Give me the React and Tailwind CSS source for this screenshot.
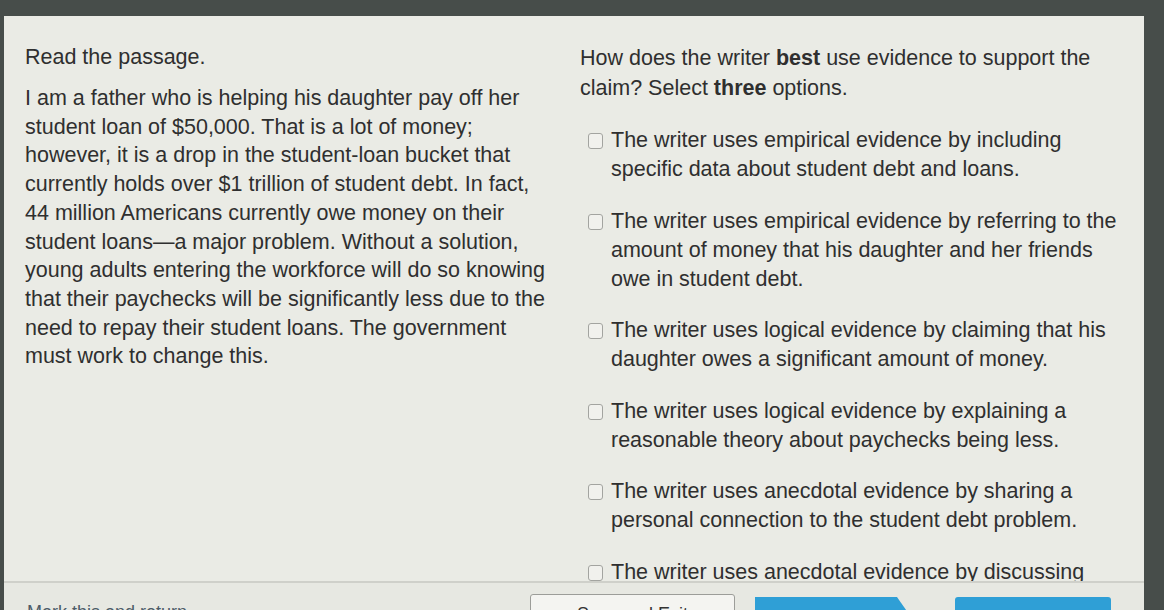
import React from "react";

const passage = [
  "I am a father who is helping his daughter pay off her",
  "student loan of $50,000. That is a lot of money;",
  "however, it is a drop in the student-loan bucket that",
  "currently holds over $1 trillion of student debt. In fact,",
  "44 million Americans currently owe money on their",
  "student loans\u2014a major problem. Without a solution,",
  "young adults entering the workforce will do so knowing",
  "that their paychecks will be significantly less due to the",
  "need to repay their student loans. The government",
  "must work to change this.",
];

const options = [
  ["The writer uses empirical evidence by including", "specific data about student debt and loans."],
  [
    "The writer uses empirical evidence by referring to the",
    "amount of money that his daughter and her friends",
    "owe in student debt.",
  ],
  ["The writer uses logical evidence by claiming that his", "daughter owes a significant amount of money."],
  ["The writer uses logical evidence by explaining a", "reasonable theory about paychecks being less."],
  ["The writer uses anecdotal evidence by sharing a", "personal connection to the student debt problem."],
  ["The writer uses anecdotal evidence by discussing", "the overall cost of a college education."],
];

export default function App() {
  return (
    <div className="h-[610px] w-[1164px] overflow-hidden bg-[#474d4a] pt-4 pl-1 pr-5 font-['Liberation_Sans',Arial,sans-serif] text-[21.5px] text-[#2f2f2f]">
      <div className="h-full bg-[#eaebe5] flex flex-col">
        {/* Question area */}
        <div className="h-[565px] shrink-0 overflow-hidden flex">
          <div className="w-[576px] shrink-0 pl-[21px] pt-[27px]">
            <p className="leading-[29px]">Read the passage.</p>
            <div className="mt-[12px] leading-[28.7px] whitespace-nowrap">
              {passage.map((line) => (
                <div key={line}>{line}</div>
              ))}
            </div>
          </div>

          <div className="flex-1 pt-[27px] whitespace-nowrap">
            <div className="leading-[30px]">
              <div>
                How does the writer <span className="font-bold">best</span> use evidence to support the
              </div>
              <div>
                claim? Select <span className="font-bold">three</span> options.
              </div>
            </div>
            <div className="mt-[23px] flex flex-col gap-[22.5px]">
              {options.map((lines, i) => (
                <label key={i} className="flex items-start gap-[8px] pl-[8px]">
                  <span className="mt-[7px] w-[15px] h-[16px] shrink-0 rounded-[3px] border-[1.5px] border-[#a3a4a0] bg-[#f1f1ed]" />
                  <span className="leading-[29px]">
                    {lines.map((l) => (
                      <div key={l}>{l}</div>
                    ))}
                  </span>
                </label>
              ))}
            </div>
          </div>
        </div>

        {/* Footer */}
        <div className="flex-1 min-h-0 overflow-hidden border-t-2 border-[#cfd0ca] bg-[#e7e8e2] flex items-start pl-[23px] pt-[11px]">
          <div className="w-[503px] shrink-0 pt-[5px] text-[18px] text-[#4d5c68]">Mark this and return</div>
          <button className="w-[205px] h-[40px] shrink-0 rounded-[3px] border border-[#9c9d99] bg-[#f4f4f1] text-[18px] text-[#333]">
            Save and Exit
          </button>
          <button className="ml-[20px] mt-[3px] w-[156px] h-[40px] shrink-0 bg-[#2f9fd6] text-[18px] text-white [clip-path:polygon(0_0,91%_0,100%_50%,91%_100%,0_100%)]">
            Next
          </button>
          <button className="ml-[44px] mt-[3px] w-[156px] h-[40px] shrink-0 rounded-[3px] bg-[#2f9fd6] text-[18px] text-white">
            Submit
          </button>
        </div>
      </div>
    </div>
  );
}
